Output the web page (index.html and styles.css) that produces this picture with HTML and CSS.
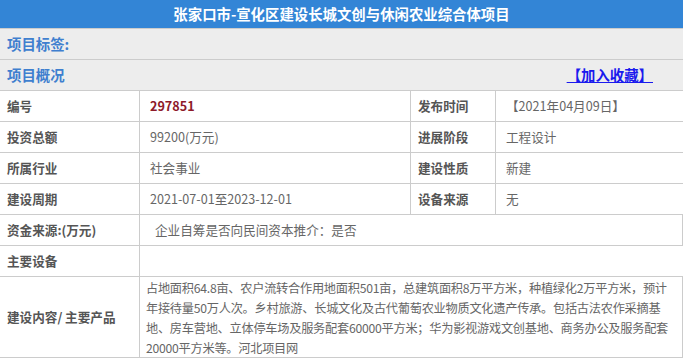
FILE: index.html
```html
<!DOCTYPE html>
<html lang="zh-CN">
<head>
<meta charset="utf-8">
<title>张家口市-宣化区建设长城文创与休闲农业综合体项目</title>
<link rel="stylesheet" href="styles.css">
</head>
<body>
<div class="page">
  <h1 class="title">张家口市-宣化区建设长城文创与休闲农业综合体项目</h1>
  <div class="bar">项目标签:</div>
  <div class="bar bar-split">
    <span>项目概况</span>
    <a class="fav" href="#">【加入收藏】</a>
  </div>
  <div class="grid">
    <div class="label">编号</div>
    <div class="value code">297851</div>
    <div class="label">发布时间</div>
    <div class="value">【2021年04月09日】</div>

    <div class="label">投资总额</div>
    <div class="value">99200(万元)</div>
    <div class="label">进展阶段</div>
    <div class="value">工程设计</div>

    <div class="label">所属行业</div>
    <div class="value">社会事业</div>
    <div class="label">建设性质</div>
    <div class="value">新建</div>

    <div class="label">建设周期</div>
    <div class="value">2021-07-01至2023-12-01</div>
    <div class="label">设备来源</div>
    <div class="value">无</div>

    <div class="label">资金来源:(万元)</div>
    <div class="value wide indent">企业自筹是否向民间资本推介：是否</div>

    <div class="label">主要设备</div>
    <div class="value wide"></div>

    <div class="label tall">建设内容/ 主要产品</div>
    <div class="value wide text">占地面积64.8亩、农户流转合作用地面积501亩，总建筑面积8万平方米，种植绿化2万平方米，预计<br>年接待量50万人次。乡村旅游、长城文化及古代葡萄农业物质文化遗产传承。包括古法农作采摘基<br>地、房车营地、立体停车场及服务配套60000平方米；华为影视游戏文创基地、商务办公及服务配套<br>20000平方米等。河北项目网</div>
  </div>
</div>
</body>
</html>
```

FILE: styles.css
```css
* { box-sizing: border-box; }
html, body { margin: 0; padding: 0; background: #fff; }
body {
  font-family: "Microsoft YaHei", "Noto Sans CJK SC", "Noto Sans", sans-serif;
  font-size: 12.6px;
  color: #555;
}
.page { width: 683px; }
.title {
  margin: 0;
  height: 29px;
  line-height: 28px;
  background: #3385d6;
  border-bottom: 1px solid #cccccc;
  color: #fff;
  font-size: 14.4px;
  font-weight: 700;
  text-align: center;
}
.bar {
  height: 31px;
  line-height: 30px;
  background: #ededed;
  border-bottom: 1px solid #cccccc;
  color: #3f7fcf;
  font-size: 14.4px;
  font-weight: 700;
  padding-left: 7px;
}
.bar-split {
  display: flex;
  justify-content: space-between;
  padding-right: 30px;
}
.fav {
  color: #1a1aee;
  text-decoration: underline;
  font-weight: 700;
}
.grid {
  display: grid;
  grid-template-columns: 140px 271px 85px 1fr;
}
.label, .value {
  height: 31px;
  line-height: 30px;
  border-bottom: 1px solid #cccccc;
  white-space: nowrap;
}
.label {
  border-right: 1px solid #cccccc;
  padding-left: 7px;
  font-weight: 700;
  color: #555;
}
.value { padding-left: 10px; color: #666; }
.grid > .value:nth-child(4n+2) { border-right: 1px solid #cccccc; }
.code { color: #8e1a2a; font-weight: 700; }
.wide { grid-column: 2 / 5; }
.indent { padding-left: 15px; }
.tall {
  height: 81px;
  display: flex;
  align-items: center;
}
.text {
  height: 81px;
  padding: 1px 0 0 6px;
  font-size: 12.2px;
  letter-spacing: -0.25px;
  line-height: 20px;
  overflow: hidden;
}
```
